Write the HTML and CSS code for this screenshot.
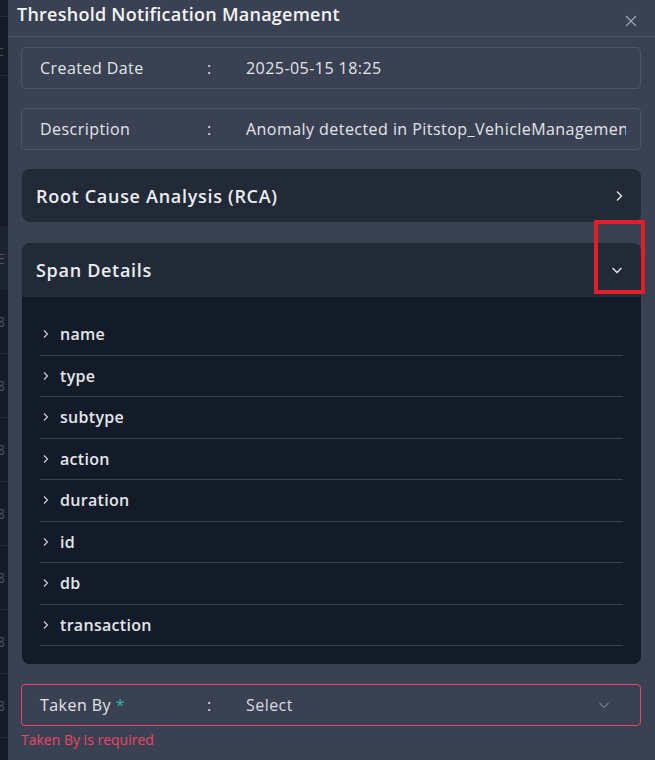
FILE: index.html
```html
<!DOCTYPE html>
<html>
<head>
<meta charset="utf-8">
<link rel="stylesheet" href="styles.css">
</head>
<body>
<div class="page">
  <div class="backdrop">
    <div class="bd-top"></div>
    <div class="bd-row bd-c"><span>c</span></div>
    <div class="bd-gap"></div>
    <div class="bd-head"><span>E</span></div>
    <div class="bd-row"><span>8</span></div>
    <div class="bd-row"><span>8</span></div>
    <div class="bd-row"><span>8</span></div>
    <div class="bd-row"><span>8</span></div>
    <div class="bd-row"><span>8</span></div>
    <div class="bd-row"><span>8</span></div>
    <div class="bd-row"><span>8</span></div>
  </div>
  <div class="modal">
    <div class="modal-header">
      <h1 class="modal-title">Threshold Notification Management</h1>
      <svg class="close" width="12" height="12" viewBox="0 0 12 12"><path d="M1 1L11 11M11 1L1 11" stroke="#9aa2b1" stroke-width="1.3" fill="none"/></svg>
    </div>
    <div class="modal-body">
      <div class="field">
        <span class="f-label">Created Date</span>
        <span class="f-colon">:</span>
        <span class="f-value">2025-05-15 18:25</span>
      </div>
      <div class="field">
        <span class="f-label">Description</span>
        <span class="f-colon">:</span>
        <span class="f-value">Anomaly detected in Pitstop_VehicleManagementAPI service</span>
      </div>
      <div class="card">
        <div class="card-head">
          <span class="card-title">Root Cause Analysis (RCA)</span>
          <svg width="8" height="12" viewBox="0 0 8 12"><path d="M2 1.5L6.5 6L2 10.5" stroke="#e6e8ec" stroke-width="1.4" fill="none"/></svg>
        </div>
      </div>
      <div class="card open">
        <div class="card-head">
          <span class="card-title">Span Details</span>
          <svg width="12" height="8" viewBox="0 0 12 8"><path d="M1.5 2L6 6.5L10.5 2" stroke="#e6e8ec" stroke-width="1.4" fill="none"/></svg>
          <div class="highlight"></div>
        </div>
        <div class="card-body">
          <div class="row"><svg width="6" height="10" viewBox="0 0 6 10"><path d="M1 1.5L4.5 5L1 8.5" stroke="#d4d7dd" stroke-width="1.1" fill="none"/></svg><span>name</span></div>
          <div class="row"><svg width="6" height="10" viewBox="0 0 6 10"><path d="M1 1.5L4.5 5L1 8.5" stroke="#d4d7dd" stroke-width="1.1" fill="none"/></svg><span>type</span></div>
          <div class="row"><svg width="6" height="10" viewBox="0 0 6 10"><path d="M1 1.5L4.5 5L1 8.5" stroke="#d4d7dd" stroke-width="1.1" fill="none"/></svg><span>subtype</span></div>
          <div class="row"><svg width="6" height="10" viewBox="0 0 6 10"><path d="M1 1.5L4.5 5L1 8.5" stroke="#d4d7dd" stroke-width="1.1" fill="none"/></svg><span>action</span></div>
          <div class="row"><svg width="6" height="10" viewBox="0 0 6 10"><path d="M1 1.5L4.5 5L1 8.5" stroke="#d4d7dd" stroke-width="1.1" fill="none"/></svg><span>duration</span></div>
          <div class="row"><svg width="6" height="10" viewBox="0 0 6 10"><path d="M1 1.5L4.5 5L1 8.5" stroke="#d4d7dd" stroke-width="1.1" fill="none"/></svg><span>id</span></div>
          <div class="row"><svg width="6" height="10" viewBox="0 0 6 10"><path d="M1 1.5L4.5 5L1 8.5" stroke="#d4d7dd" stroke-width="1.1" fill="none"/></svg><span>db</span></div>
          <div class="row"><svg width="6" height="10" viewBox="0 0 6 10"><path d="M1 1.5L4.5 5L1 8.5" stroke="#d4d7dd" stroke-width="1.1" fill="none"/></svg><span>transaction</span></div>
        </div>
      </div>
      <div class="field error">
        <span class="f-label">Taken By <span class="req">*</span></span>
        <span class="f-colon">:</span>
        <span class="f-value select">Select</span>
        <svg class="sel-chev" width="12" height="8" viewBox="0 0 12 8"><path d="M1.5 2L6 6.5L10.5 2" stroke="#6f7789" stroke-width="1.1" fill="none"/></svg>
      </div>
      <div class="err-msg">Taken By is required</div>
    </div>
  </div>
</div>
</body>
</html>
```

FILE: styles.css
```css
html, body {
  margin: 0;
  padding: 0;
  background: #151b27;
}
body {
  font-family: "Open Sans", "Liberation Sans", sans-serif;
  color: #e4e7ec;
}
.page {
  display: flex;
  width: 655px;
  height: 760px;
  overflow: hidden;
}
.backdrop {
  width: 8px;
  flex: none;
  overflow: hidden;
  background: #151b27;
  color: #4d5566;
  font-size: 14px;
}
.backdrop span {
  display: block;
  margin-left: -3px;
}
.bd-top {
  height: 16px;
  border-bottom: 1px solid #232a37;
  background: #171d29;
}
.bd-row {
  height: 63px;
  border-bottom: 1px solid #262d3a;
  display: flex;
  align-items: center;
}
.bd-c {
  height: 58px;
  align-items: flex-start;
}
.bd-c span { margin-top: 24px; }
.bd-gap { height: 151px; }
.bd-head {
  height: 63px;
  background: #1c2331;
  display: flex;
  align-items: center;
}
.modal {
  flex: 1;
  min-width: 0;
  background: #394152;
  display: flex;
  flex-direction: column;
}
.modal-header {
  height: 37px;
  border-bottom: 1px solid #4a5263;
  display: flex;
  align-items: flex-start;
  justify-content: space-between;
  padding: 0 18px 0 9px;
  box-sizing: border-box;
}
.modal-title {
  margin: 2px 0 0;
  font-size: 18px;
  font-weight: 600;
  color: #f3f4f6;
  letter-spacing: 0.25px;
}
.close {
  margin-top: 15px;
}
.modal-body {
  padding: 10px 14px 0 13px;
  display: flex;
  flex-direction: column;
}
.field {
  height: 42px;
  border: 1px solid #4c5567;
  border-radius: 4px;
  box-sizing: border-box;
  display: flex;
  align-items: center;
  padding: 0 14px 0 18px;
  font-size: 16px;
  letter-spacing: 0.45px;
  margin-bottom: 19px;
  color: #e2e5ea;
}
.f-label {
  width: 167px;
  flex: none;
  white-space: nowrap;
}
.f-colon {
  width: 39px;
  flex: none;
}
.f-value {
  flex: 1;
  min-width: 0;
  white-space: nowrap;
  overflow: hidden;
}
.card {
  margin-left: 1px;
  border-radius: 8px;
  background: #222a38;
  margin-bottom: 21px;
}
.card.open {
  margin-bottom: 20px;
}
.card-head {
  height: 53px;
  display: flex;
  align-items: center;
  justify-content: space-between;
  padding: 0 18px 0 14px;
  position: relative;
}
.open .card-head {
  height: 54px;
}
.card-title {
  font-size: 18px;
  font-weight: 600;
  letter-spacing: 0.7px;
  color: #eceef2;
}
.card-body {
  background: #131a28;
  border-radius: 0 0 8px 8px;
  padding: 17px 18px 18px 18px;
}
.row {
  height: 40.5px;
  border-bottom: 1px solid #3a4251;
  display: flex;
  align-items: center;
  gap: 11px;
  padding-left: 3px;
  font-size: 16px;
  font-weight: 600;
  letter-spacing: 0.3px;
  color: #e4e6ea;
}
.highlight {
  position: absolute;
  right: -4px;
  top: -23px;
  width: 43px;
  height: 66px;
  border: 4px solid #e41e26;
}
.field.error {
  border-color: #ea4662;
  margin-bottom: 0;
}
.req { color: #2bb3a8; }
.select { color: #d8dbe1; }
.sel-chev { margin-right: 16px; flex: none; }
.err-msg {
  margin-top: 4px;
  color: #ea4662;
  font-size: 14px;
}
```
